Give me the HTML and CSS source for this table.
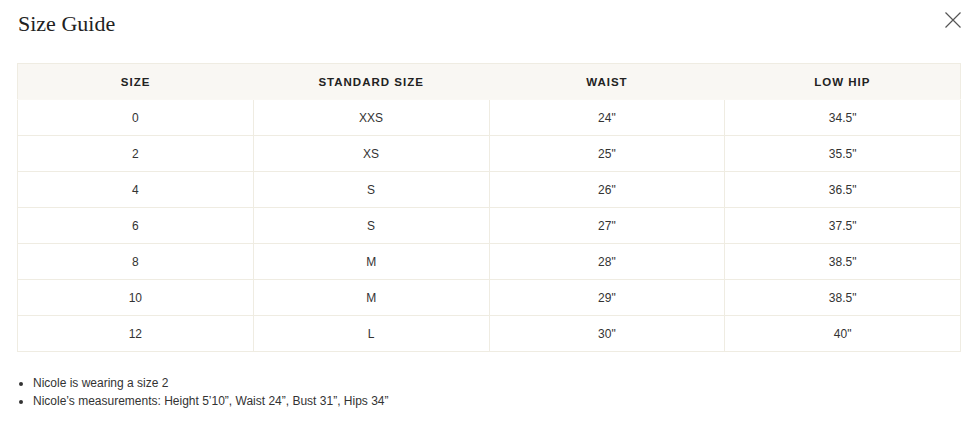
FILE: index.html
```html
<!DOCTYPE html>
<html>
<head>
<meta charset="utf-8">
<link rel="stylesheet" href="styles.css">
</head>
<body>
<div class="modal">
  <div class="modal-head">
    <h1 class="title">Size Guide</h1>
    <button class="close" aria-label="Close">
      <svg width="16" height="16" viewBox="0 0 16 16"><path d="M0.5 0.5 L15.5 15.5 M15.5 0.5 L0.5 15.5" stroke="#555" stroke-width="1.2" fill="none"/></svg>
    </button>
  </div>
  <table class="sizes">
    <thead>
      <tr><th>SIZE</th><th>STANDARD SIZE</th><th>WAIST</th><th>LOW HIP</th></tr>
    </thead>
    <tbody>
      <tr><td>0</td><td>XXS</td><td>24"</td><td>34.5"</td></tr>
      <tr><td>2</td><td>XS</td><td>25"</td><td>35.5"</td></tr>
      <tr><td>4</td><td>S</td><td>26"</td><td>36.5"</td></tr>
      <tr><td>6</td><td>S</td><td>27"</td><td>37.5"</td></tr>
      <tr><td>8</td><td>M</td><td>28"</td><td>38.5"</td></tr>
      <tr><td>10</td><td>M</td><td>29"</td><td>38.5"</td></tr>
      <tr><td>12</td><td>L</td><td>30"</td><td>40"</td></tr>
    </tbody>
  </table>
  <ul class="notes">
    <li>Nicole is wearing a size 2</li>
    <li>Nicole’s measurements: Height 5’10”, Waist 24”, Bust 31”, Hips 34”</li>
  </ul>
</div>
</body>
</html>
```
FILE: styles.css
```css
html, body { margin: 0; padding: 0; background: #fff; }
.modal {
  padding: 0 5px 0 17px;
  font-family: "Liberation Sans", Arial, sans-serif;
  color: #333;
}
.modal-head {
  display: flex;
  justify-content: space-between;
  align-items: flex-start;
  height: 63px;
}
.title {
  margin: 9px 0 0 1px;
  font-family: "Liberation Serif", "Times New Roman", serif;
  font-weight: normal;
  font-size: 22px;
  line-height: 30px;
  color: #222;
}
.close {
  margin: 12px 0 0 0;
  padding: 0;
  border: 0;
  background: none;
  width: 16px;
  height: 16px;
  display: block;
}
.close svg { display: block; }
.sizes {
  width: 944px;
  border-collapse: collapse;
  table-layout: fixed;
  border: 1px solid #efece2;
}
.sizes th {
  background: #f9f7f3;
  height: 35px;
  padding: 0;
  font-size: 11.5px;
  font-weight: bold;
  letter-spacing: 1px;
  color: #222;
  text-align: center;
  border-bottom: 1px solid #faf8f4;
}
.sizes td {
  height: 35px;
  padding: 0;
  font-size: 12px;
  text-align: center;
  color: #333;
  border: 1px solid #efece2;
}
.notes {
  margin: 22px 0 0 0;
  padding: 0 0 0 16px;
  font-size: 12px;
  line-height: 18px;
  color: #333;
}
```
